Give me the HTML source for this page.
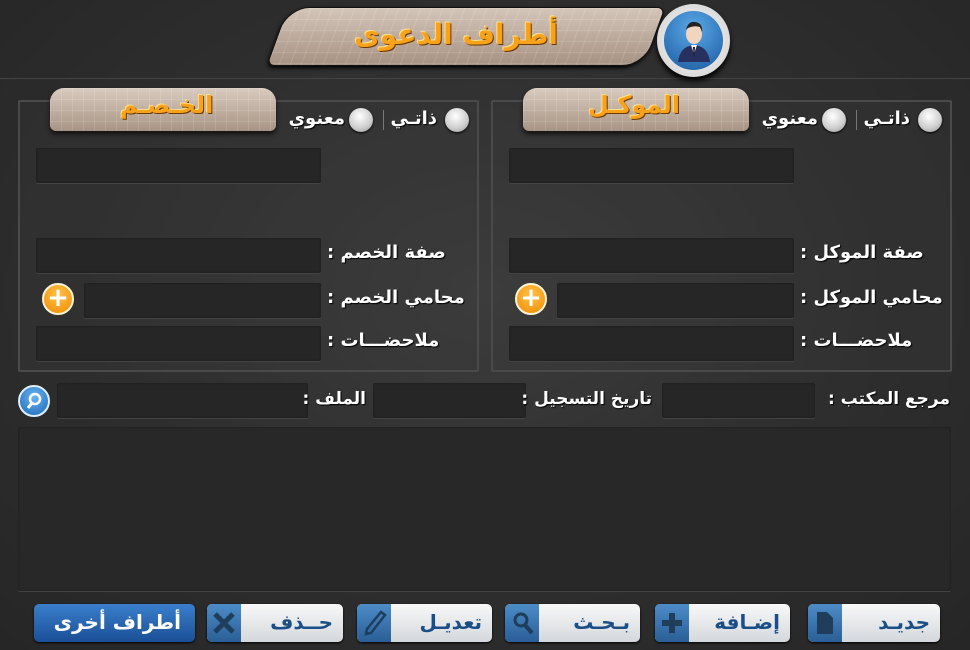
<!DOCTYPE html>
<html><head><meta charset="utf-8"><style>
*{box-sizing:border-box;margin:0;padding:0}
body{width:970px;height:650px;overflow:hidden;background:radial-gradient(ellipse at 50% 45%,#3c3c3c 0%,#2e2e2e 55%,#262626 100%);font-family:"DejaVu Sans","Liberation Sans",sans-serif;color:#fff;position:relative;direction:ltr}
.a{position:absolute}
.inp{position:absolute;background:#262626;border-radius:2px;box-shadow:inset 0 0 2px #1a1a1a,0 1px 0 #444}
.panel{position:absolute;border:2px solid #4a4a4a;border-radius:2px;background:rgba(60,60,60,.25)}
.tab{position:absolute;height:43px;border-radius:14px 14px 6px 6px;background-image:linear-gradient(rgba(255,255,255,.12) 1px,transparent 1px),linear-gradient(90deg,rgba(255,255,255,.12) 1px,transparent 1px),linear-gradient(#d9cbbf,#a89484);background-size:11px 11px,11px 11px,100% 100%;box-shadow:0 3px 5px #111}
.tt{position:absolute;font-weight:bold;color:#f7a21a;text-shadow:1px 1px 0 #6a3a00,-1px -1px 0 #ffe08a;font-size:24px;white-space:nowrap}
.lbl{position:absolute;font-weight:bold;font-size:18px;white-space:nowrap;text-align:right;text-shadow:1px 1px 1px #000}
.rad{position:absolute;width:24px;height:24px;border-radius:50%;background:radial-gradient(circle at 45% 35%,#fff,#ccc 60%,#888);box-shadow:0 1px 2px #000}
.plus{position:absolute;width:32px;height:32px;border-radius:50%;background:radial-gradient(circle at 50% 35%,#ffc24a,#f08a00);border:2px solid #fff4d8;color:#fff;font-weight:bold;font-size:26px;line-height:26px;text-align:center}
.btn{position:absolute;top:604px;height:38px;border-radius:5px;background:linear-gradient(#f8f8f8,#d4d8dc);box-shadow:0 1px 2px #000}
.btn .ic{position:absolute;left:0;top:0;width:34px;height:38px;background:linear-gradient(#4d8cc8,#2a5e96);border-radius:5px 0 0 5px}
.btn span{position:absolute;right:10px;top:6px;font-weight:bold;font-size:20px;color:#1a4e86}
</style></head><body>
<div class="a" style="left:0;top:78px;width:970px;height:1px;background:#444"></div>
<div class="a" style="left:277px;top:7px;width:378px;height:59px;border-radius:22px 8px 22px 8px;transform:skewX(-20deg);background-image:linear-gradient(rgba(255,255,255,.13) 1px,transparent 1px),linear-gradient(90deg,rgba(255,255,255,.13) 1px,transparent 1px),linear-gradient(#d4c5b9,#a69282);background-size:11px 11px,11px 11px,100% 100%;border:1px solid #111;box-shadow:0 2px 4px #000"></div>
<div class="tt" style="right:412px;top:18px;font-size:28px">أطراف الدعوى</div>
<div class="a" style="left:657px;top:4px;width:73px;height:73px;border-radius:50%;background:radial-gradient(#fff,#ccc);box-shadow:0 4px 6px #000"></div>
<div class="a" style="left:664px;top:11px;width:59px;height:59px;border-radius:50%;background:radial-gradient(circle at 50% 30%,#5aa8e8,#1a5a9e)"></div>
<svg class="a" style="left:668px;top:14px" width="52" height="52"><ellipse cx="26" cy="20" rx="8" ry="10" fill="#f2d5c0"/><path d="M18 16 Q20 7 27 8 Q35 9 34 18 L32 13 Q26 11 20 14Z" fill="#222"/><path d="M10 48 Q12 32 26 31 Q40 32 42 48Z" fill="#27305e"/><path d="M23 31 L26 40 L29 31Z" fill="#fff"/><path d="M25 33 L26 44 L27 33Z" fill="#111"/></svg>
<div class="panel" style="left:18px;top:100px;width:461px;height:272px"></div>
<div class="panel" style="left:491px;top:100px;width:461px;height:272px"></div>
<div class="tab" style="left:50px;top:88px;width:226px"></div>
<div class="tt" style="left:120px;top:91px">الخـصـم</div>
<div class="tab" style="left:523px;top:88px;width:226px"></div>
<div class="tt" style="left:588px;top:91px">الموكـل</div>
<div class="rad" style="left:918px;top:108px"></div>
<div class="lbl" style="right:60px;top:108px">ذاتـي</div>
<div class="a" style="left:856px;top:110px;width:1px;height:20px;background:#777"></div>
<div class="rad" style="left:822px;top:108px"></div>
<div class="lbl" style="right:152px;top:108px">معنوي</div>
<div class="inp" style="left:509px;top:148px;width:285px;height:35px"></div>
<div class="inp" style="left:509px;top:238px;width:285px;height:35px"></div>
<div class="inp" style="left:557px;top:283px;width:237px;height:35px"></div>
<div class="inp" style="left:509px;top:326px;width:285px;height:35px"></div>
<div class="plus" style="left:515px;top:283px">+</div>
<div class="lbl" style="left:800px;top:242px">: صفة الموكل</div>
<div class="lbl" style="left:800px;top:287px">: محامي الموكل</div>
<div class="lbl" style="left:800px;top:330px">: ملاحضـــات</div>
<div class="rad" style="left:445px;top:108px"></div>
<div class="lbl" style="right:533px;top:108px">ذاتـي</div>
<div class="a" style="left:383px;top:110px;width:1px;height:20px;background:#777"></div>
<div class="rad" style="left:349px;top:108px"></div>
<div class="lbl" style="right:625px;top:108px">معنوي</div>
<div class="inp" style="left:36px;top:148px;width:285px;height:35px"></div>
<div class="inp" style="left:36px;top:238px;width:285px;height:35px"></div>
<div class="inp" style="left:84px;top:283px;width:237px;height:35px"></div>
<div class="inp" style="left:36px;top:326px;width:285px;height:35px"></div>
<div class="plus" style="left:42px;top:283px">+</div>
<div class="lbl" style="left:327px;top:242px">: صفة الخصم</div>
<div class="lbl" style="left:327px;top:287px">: محامي الخصم</div>
<div class="lbl" style="left:327px;top:330px">: ملاحضـــات</div>
<div class="inp" style="left:662px;top:383px;width:153px;height:35px"></div>
<div class="inp" style="left:373px;top:383px;width:153px;height:35px"></div>
<div class="inp" style="left:57px;top:383px;width:251px;height:35px"></div>
<div class="lbl" style="right:20px;top:389px;font-size:17px">: مرجع المكتب</div>
<div class="lbl" style="right:318px;top:389px;font-size:17px">: تاريخ التسجيل</div>
<div class="lbl" style="right:604px;top:389px;font-size:17px">: الملف</div>
<div class="a" style="left:18px;top:385px;width:32px;height:32px;border-radius:50%;background:radial-gradient(circle at 50% 35%,#6ab4f0,#1a68b8);border:2px solid #dfefff"></div>
<svg class="a" style="left:22px;top:389px" width="24" height="24"><circle cx="13" cy="10" r="5" fill="none" stroke="#fff" stroke-width="2.5"/><path d="M10 14 L6 19" stroke="#fff" stroke-width="3"/></svg>
<div class="inp" style="left:18px;top:427px;width:933px;height:164px;background:#282828"></div>
<div class="btn" style="left:808px;width:132px"><div class="ic"></div><svg class="a" style="left:8px;top:7px" width="18" height="24"><path d="M1 1 H11 L17 7 V23 H1Z" fill="#1e3e5c"/></svg><span>جديـد</span></div>
<div class="btn" style="left:655px;width:135px"><div class="ic"></div><svg class="a" style="left:5px;top:7px" width="24" height="24"><path d="M9 2h6v7h7v6h-7v7H9v-7H2V9h7z" fill="#1e3e5c"/></svg><span>إضـافة</span></div>
<div class="btn" style="left:505px;width:135px"><div class="ic"></div><svg class="a" style="left:5px;top:6px" width="26" height="26"><circle cx="11" cy="10" r="6" fill="none" stroke="#1e3e5c" stroke-width="3"/><path d="M15 15 L22 23" stroke="#1e3e5c" stroke-width="4"/></svg><span>بـحـث</span></div>
<div class="btn" style="left:357px;width:135px"><div class="ic"></div><svg class="a" style="left:6px;top:6px" width="24" height="26"><path d="M18 2 L22 5 L8 23 L3 24 L4 19Z" fill="none" stroke="#1e3e5c" stroke-width="2.5"/></svg><span>تعديـل</span></div>
<div class="btn" style="left:207px;width:136px"><div class="ic"></div><svg class="a" style="left:5px;top:7px" width="24" height="24"><path d="M3 3 L21 21 M21 3 L3 21" stroke="#1e3e5c" stroke-width="5"/></svg><span>حــذف</span></div>
<div class="btn" style="left:34px;width:161px;background:linear-gradient(#3a7fcc,#1a4f96)"><span style="color:#fff;right:14px">أطراف أخرى</span></div>
</body></html>
